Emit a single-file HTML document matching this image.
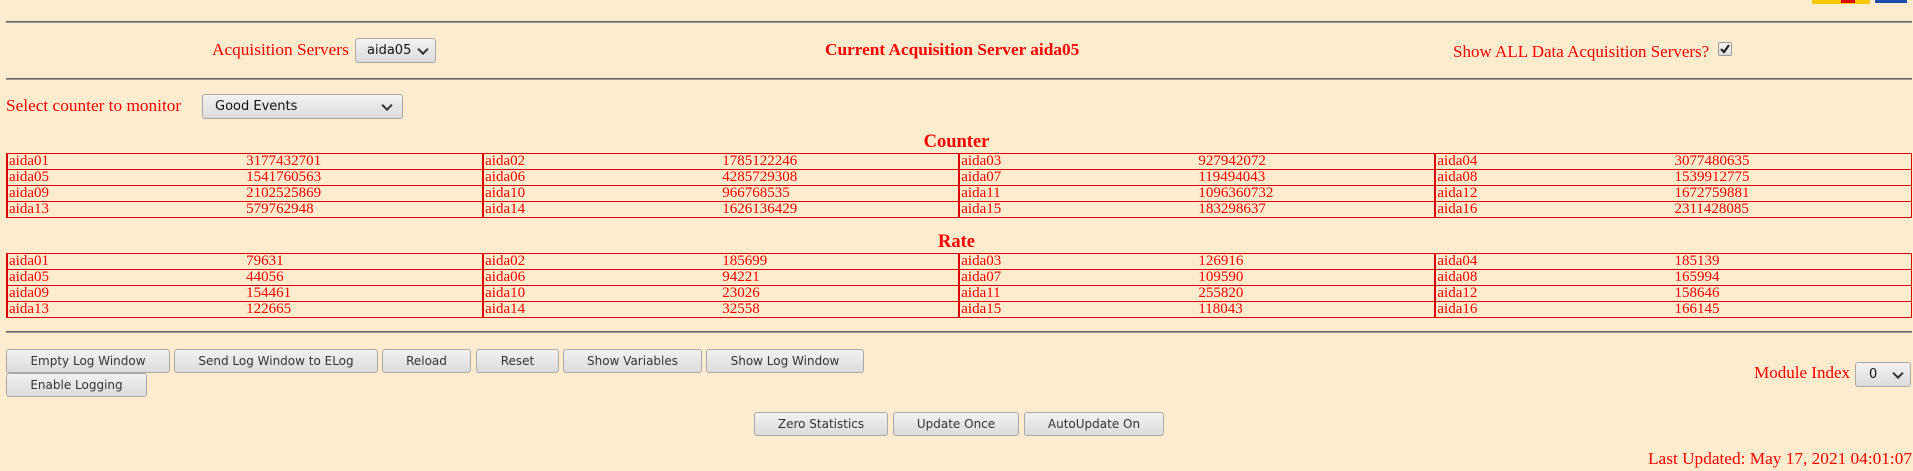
<!DOCTYPE html>
<html><head><meta charset="utf-8"><style>
body{margin:0;width:1913px;height:471px;background:#ffebcd;position:relative;overflow:hidden;font-family:"Liberation Serif",serif;color:#ff0000;font-size:17.3px}
.a{position:absolute;white-space:nowrap}
.hr{position:absolute;left:6px;width:1906px;height:1px;background:#666;border-bottom:1px solid #999}
.btn,.sel{position:absolute;box-sizing:border-box;border:1px solid #a8a8a8;border-radius:3px;background:linear-gradient(#f2f2f2,#dcdcdc);font-family:"DejaVu Sans",sans-serif;font-size:12px;color:#333;text-align:center;white-space:nowrap}
.sel{text-align:left;color:#111;font-size:13px}
.chev{position:absolute;right:8px;top:50%;width:6px;height:6px;border-right:2px solid #333;border-bottom:2px solid #333;transform:translateY(-70%) rotate(45deg)}
table{position:absolute;left:6px;width:1906px;border-collapse:collapse;table-layout:fixed;font-size:15px}
td{border-top:1px solid #d00;border-bottom:1px solid #d00;height:15px;line-height:15px;padding:0 0 0 1px;overflow:hidden;white-space:nowrap}
td.n{border-left:2px solid #d00}
td.v{border-right:1px solid #d00}
h3{position:absolute;left:0;width:1913px;text-align:center;margin:0;font-size:18.5px;font-weight:bold}
</style></head><body>
<div class="a" style="left:1812px;top:0;width:58px;height:4px;background:#f8c800"></div>
<div class="a" style="left:1841px;top:0;width:14px;height:3px;background:#d00"></div>
<div class="a" style="left:1875px;top:0;width:32px;height:3px;background:#1b4aa8"></div>
<div class="hr" style="top:21px"></div>
<div class="a" style="left:212px;top:40px">Acquisition Servers</div>
<div class="sel" style="left:355px;top:38px;width:81px;height:25px;line-height:23px;padding-left:11px">aida05<span class="chev"></span></div>
<div class="a" style="left:825px;top:40px;font-weight:bold">Current Acquisition Server aida05</div>
<div class="a" style="left:1453px;top:42px;font-size:17px">Show ALL Data Acquisition Servers?</div>
<div class="a" style="left:1718px;top:42px;width:14px;height:14px;box-sizing:border-box;border:1px solid #999;border-radius:2px;background:linear-gradient(#f6f6f6,#ddd)"><svg width="12" height="12" style="position:absolute;left:0;top:0"><path d="M2 6 L5 9 L10 2" stroke="#222" stroke-width="2.2" fill="none"/></svg></div>
<div class="hr" style="top:78px"></div>
<div class="a" style="left:6px;top:96px">Select counter to monitor</div>
<div class="sel" style="left:202px;top:94px;width:201px;height:25px;line-height:23px;padding-left:12px">Good Events<span class="chev" style="right:11px"></span></div>
<h3 style="top:132px">Counter</h3>
<table style="top:153px"><colgroup><col><col><col><col><col><col><col><col></colgroup>
<tr><td class="n">aida01</td><td class="v">3177432701</td><td class="n">aida02</td><td class="v">1785122246</td><td class="n">aida03</td><td class="v">927942072</td><td class="n">aida04</td><td class="v">3077480635</td></tr>
<tr><td class="n">aida05</td><td class="v">1541760563</td><td class="n">aida06</td><td class="v">4285729308</td><td class="n">aida07</td><td class="v">119494043</td><td class="n">aida08</td><td class="v">1539912775</td></tr>
<tr><td class="n">aida09</td><td class="v">2102525869</td><td class="n">aida10</td><td class="v">966768535</td><td class="n">aida11</td><td class="v">1096360732</td><td class="n">aida12</td><td class="v">1672759881</td></tr>
<tr><td class="n">aida13</td><td class="v">579762948</td><td class="n">aida14</td><td class="v">1626136429</td><td class="n">aida15</td><td class="v">183298637</td><td class="n">aida16</td><td class="v">2311428085</td></tr>
</table>
<h3 style="top:232px">Rate</h3>
<table style="top:253px"><colgroup><col><col><col><col><col><col><col><col></colgroup>
<tr><td class="n">aida01</td><td class="v">79631</td><td class="n">aida02</td><td class="v">185699</td><td class="n">aida03</td><td class="v">126916</td><td class="n">aida04</td><td class="v">185139</td></tr>
<tr><td class="n">aida05</td><td class="v">44056</td><td class="n">aida06</td><td class="v">94221</td><td class="n">aida07</td><td class="v">109590</td><td class="n">aida08</td><td class="v">165994</td></tr>
<tr><td class="n">aida09</td><td class="v">154461</td><td class="n">aida10</td><td class="v">23026</td><td class="n">aida11</td><td class="v">255820</td><td class="n">aida12</td><td class="v">158646</td></tr>
<tr><td class="n">aida13</td><td class="v">122665</td><td class="n">aida14</td><td class="v">32558</td><td class="n">aida15</td><td class="v">118043</td><td class="n">aida16</td><td class="v">166145</td></tr>
</table>
<div class="hr" style="top:331px"></div>
<div class="btn" style="left:6px;top:349px;width:164px;height:24px;line-height:22px">Empty Log Window</div>
<div class="btn" style="left:174px;top:349px;width:204px;height:24px;line-height:22px">Send Log Window to ELog</div>
<div class="btn" style="left:382px;top:349px;width:89px;height:24px;line-height:22px">Reload</div>
<div class="btn" style="left:476px;top:349px;width:83px;height:24px;line-height:22px">Reset</div>
<div class="btn" style="left:563px;top:349px;width:139px;height:24px;line-height:22px">Show Variables</div>
<div class="btn" style="left:706px;top:349px;width:158px;height:24px;line-height:22px">Show Log Window</div>
<div class="btn" style="left:6px;top:373px;width:141px;height:24px;line-height:22px">Enable Logging</div>
<div class="a" style="right:63px;top:363px;font-size:17px">Module Index</div>
<div class="sel" style="left:1855px;top:362px;width:56px;height:25px;line-height:23px;padding-left:13px">0<span class="chev"></span></div>
<div class="btn" style="left:754px;top:412px;width:134px;height:24px;line-height:22px">Zero Statistics</div>
<div class="btn" style="left:893px;top:412px;width:126px;height:24px;line-height:22px">Update Once</div>
<div class="btn" style="left:1024px;top:412px;width:140px;height:24px;line-height:22px">AutoUpdate On</div>
<div class="a" style="right:1px;top:449px">Last Updated: May 17, 2021 04:01:07</div>
</body></html>
